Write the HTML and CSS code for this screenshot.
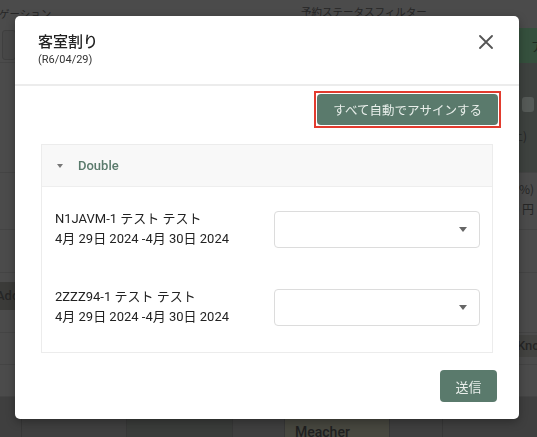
FILE: index.html
```html
<!DOCTYPE html>
<html lang="ja">
<head>
<meta charset="utf-8">
<title>客室割り</title>
<link rel="stylesheet" href="styles.css">
</head>
<body>
<div class="page" aria-hidden="true">
  <div class="bg-row bg-top">
    <span class="bg-nav">ゲーション</span>
    <span class="bg-filter">予約ステータスフィルター</span>
  </div>
  <div class="bg-row bg-r2">
    <span class="bg-box"></span>
    <span class="bg-green">ア</span>
  </div>
  <div class="bg-row bg-r3">
    <span></span>
    <span class="bg-dark"><span class="bg-chip"></span><span class="bg-txt">(土)</span></span>
  </div>
  <div class="bg-row bg-r4">
    <span></span>
    <span class="bg-money"><span>(10%)</span><span>1,000 円</span></span>
  </div>
  <div class="bg-row bg-r5"></div>
  <div class="bg-row bg-r6">
    <span class="bg-add">Add</span>
    <span></span>
  </div>
  <div class="bg-row bg-r7">
    <span></span>
    <span class="bg-kn">Kno</span>
  </div>
  <div class="bg-row bg-r8"></div>
  <div class="bg-cells">
    <span class="c c1"></span>
    <span class="c c2"></span>
    <span class="c c3"></span>
    <span class="c c4"></span>
    <span class="c c5">Meacher</span>
    <span class="c c6"></span>
    <span class="c c7"></span>
  </div>
</div>

<div class="overlay">
  <div class="modal" role="dialog" aria-labelledby="modal-title">
    <header class="modal-header">
      <div class="heading">
        <h2 class="modal-title" id="modal-title">客室割り</h2>
        <p class="modal-sub">(R6/04/29)</p>
      </div>
      <button class="close" type="button" aria-label="閉じる">
        <svg width="14" height="14" viewBox="0 0 14 14" aria-hidden="true"><path d="M1 1 L13 13 M13 1 L1 13" stroke="#555" stroke-width="1.8" stroke-linecap="round" fill="none"/></svg>
      </button>
    </header>

    <div class="modal-body">
      <div class="actions">
        <span class="focus-ring"><button class="btn btn-auto" type="button">すべて自動でアサインする</button></span>
      </div>

      <section class="panel">
        <div class="panel-head">
          <span class="caret"></span>
          <span class="panel-title">Double</span>
        </div>
        <div class="panel-body">
          <div class="assign-row">
            <div class="guest">
              <div class="line">N1JAVM-1 テスト テスト</div>
              <div class="line">4月 29日 2024 -4月 30日 2024</div>
            </div>
            <div class="select"><span class="select-arrow"></span></div>
          </div>
          <div class="assign-row">
            <div class="guest">
              <div class="line">2ZZZ94-1 テスト テスト</div>
              <div class="line">4月 29日 2024 -4月 30日 2024</div>
            </div>
            <div class="select"><span class="select-arrow"></span></div>
          </div>
        </div>
      </section>
    </div>

    <footer class="modal-footer">
      <button class="btn btn-send" type="button">送信</button>
    </footer>
  </div>
</div>
</body>
</html>
```

FILE: styles.css
```css
* { box-sizing: border-box; }

html, body {
  margin: 0;
  padding: 0;
}

body {
  width: 537px;
  height: 437px;
  overflow: hidden;
  font-family: Roboto, "Noto Sans CJK JP", sans-serif;
  color: #222;
}

/* ---------- dimmed page behind the dialog ---------- */
.page {
  width: 537px;
  height: 437px;
  background: #4b4b4b;
  overflow: hidden;
  font-family: "Noto Sans CJK JP", sans-serif;
  color: #262626;
}

.bg-row {
  display: flex;
  justify-content: space-between;
  align-items: flex-start;
  border-bottom: 1px solid #444;
}

.bg-top {
  height: 28px;
  justify-content: flex-start;
  border-bottom: none;
  font-size: 10.5px;
  line-height: 14px;
}

.bg-nav {
  width: 302px;
  padding-top: 7px;
  margin-left: -1px;
}

.bg-filter {
  padding-top: 5px;
}

.bg-r2 {
  height: 35px;
}

.bg-box {
  width: 14px;
  height: 30px;
  margin: 2px 0 0 2px;
  border: 1px solid #3f3f3f;
  border-radius: 3px;
  background: #474747;
}

.bg-green {
  width: 40px;
  height: 35px;
  padding-left: 34px;
  background: #35503d;
  overflow: hidden;
  white-space: nowrap;
  font-size: 13px;
  line-height: 35px;
  color: #1d2920;
}

.bg-r3 {
  height: 110px;
}

.bg-dark {
  display: flex;
  flex-direction: column;
  width: 60px;
  height: 109px;
  padding-left: 45px;
  background: #3e423f;
  overflow: hidden;
  white-space: nowrap;
}

.bg-chip {
  width: 12px;
  height: 15px;
  margin-top: 34px;
  background: #555a57;
  border-radius: 3px;
}

.bg-txt {
  margin: 16px 0 0 -15px;
  font-size: 12px;
  line-height: 16px;
}

.bg-r4 {
  height: 57px;
}

.bg-money {
  display: flex;
  flex-direction: column;
  align-items: flex-end;
  padding: 6px 3px 0 0;
  font-size: 12px;
  line-height: 20px;
  white-space: nowrap;
}

.bg-r5 {
  height: 43px;
}

.bg-r6 {
  height: 60px;
}

.bg-add {
  margin: 9px 0 0 -10px;
  height: 28px;
  padding: 0 6px;
  background: #3b3b39;
  font-family: Roboto, sans-serif;
  font-weight: 500;
  font-size: 13px;
  line-height: 28px;
}

.bg-r7 {
  height: 32px;
}

.bg-kn {
  width: 24px;
  height: 22px;
  margin-top: 2px;
  padding-left: 4px;
  background: #434341;
  overflow: hidden;
  white-space: nowrap;
  font-family: Roboto, sans-serif;
  font-weight: 500;
  font-size: 13px;
  line-height: 22px;
}

.bg-r8 {
  height: 32px;
}

.bg-cells {
  display: flex;
  height: 40px;
}

.c {
  height: 40px;
  border-right: 1px solid #373737;
  background: #3f3f3f;
}
.c1 { width: 22px; }
.c2 { width: 105px; }
.c3 { width: 106px; background: #3a3c3a; }
.c4 { width: 52px; }
.c5 {
  width: 105px;
  padding: 27px 0 0 10px;
  background: #47473f;
  font-family: Roboto, sans-serif;
  font-weight: 500;
  font-size: 14px;
  line-height: 16px;
  color: #1f1f1f;
}
.c6 { width: 53px; }
.c7 { flex: 1; border-right: none; }

/* ---------- dialog ---------- */
.overlay {
  position: fixed;
  inset: 0;
  padding: 16px 0 0 15px;
}

.modal {
  width: 504px;
  background: #fff;
  border-radius: 5px;
  box-shadow: 0 3px 10px rgba(0, 0, 0, 0.3);
}

.modal-header {
  display: flex;
  justify-content: space-between;
  align-items: flex-start;
  padding: 14px 26px 16px 23px;
  border-bottom: 2px solid #ececec;
}

.modal-title {
  margin: 0;
  font-family: "Noto Sans CJK JP", sans-serif;
  font-size: 15px;
  line-height: 22px;
  font-weight: 500;
  color: #222;
}

.modal-sub {
  margin: 0;
  font-size: 11px;
  line-height: 16px;
  color: #333;
}

.close {
  display: flex;
  margin-top: 5px;
  padding: 0;
  border: none;
  background: none;
  cursor: pointer;
}

.modal-body {
  padding: 5px 18px 0 20px;
}

.actions {
  display: flex;
  justify-content: flex-end;
}

.focus-ring {
  display: inline-flex;
  padding: 1px;
  border: 2px solid #e23b2e;
}

.btn {
  border: none;
  border-radius: 4px;
  background: #5a7a6c;
  color: #e9efeb;
  font-family: "Noto Sans CJK JP", sans-serif;
  cursor: pointer;
}

.btn-auto {
  height: 31px;
  padding: 0 16px;
  font-size: 12.5px;
}

.panel {
  margin: 16px 8px 0 6px;
  border: 1px solid #ececec;
}

.panel-head {
  display: flex;
  align-items: center;
  gap: 15px;
  height: 42px;
  padding: 0 15px;
  background: #f8f8f8;
  border-bottom: 1px solid #eeeeee;
}

.caret {
  width: 0;
  height: 0;
  border-left: 3.5px solid transparent;
  border-right: 3.5px solid transparent;
  border-top: 4px solid #777;
}

.panel-title {
  font-family: Roboto, sans-serif;
  font-weight: 500;
  font-size: 13px;
  color: #5a7a6c;
}

.panel-body {
  padding: 3px 12px 6px 13px;
}

.assign-row {
  display: grid;
  grid-template-columns: 1fr 206px;
  align-items: center;
  padding: 19px 0;
}

.guest {
  font-family: Roboto, "Noto Sans CJK JP", sans-serif;
  font-size: 13px;
  line-height: 20px;
  color: #222;
  white-space: nowrap;
}

.line {
  height: 20px;
}

.select {
  display: flex;
  justify-content: flex-end;
  align-items: center;
  height: 37px;
  padding-right: 12px;
  border: 1px solid #dcdcdc;
  border-radius: 4px;
  background: #fff;
}

.select-arrow {
  width: 0;
  height: 0;
  border-left: 4px solid transparent;
  border-right: 4px solid transparent;
  border-top: 5px solid #666;
}

.modal-footer {
  display: flex;
  justify-content: flex-end;
  padding: 17px 22px 17px;
}

.btn-send {
  width: 57px;
  height: 32px;
  padding: 0;
  font-size: 13px;
}
```
